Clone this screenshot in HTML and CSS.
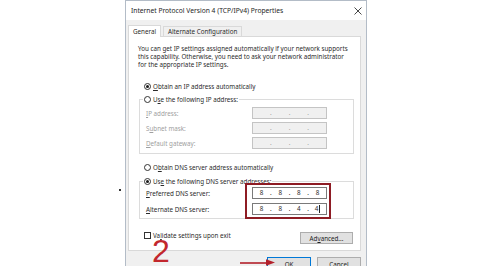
FILE: index.html
```html
<!DOCTYPE html>
<html>
<head>
<meta charset="utf-8">
<link rel="stylesheet" href="styles.css">
</head>
<body>
<div class="page">
  <span class="dot"></span>
  <div class="dialog">
    <div class="titlebar">
      <span class="title">Internet Protocol Version 4 (TCP/IPv4) Properties</span>
      <svg class="close" width="8" height="8" viewBox="0 0 8 8"><path d="M0.5 0.5L7.5 7.5M7.5 0.5L0.5 7.5" stroke="#333" stroke-width="0.9" fill="none"/></svg>
    </div>
    <div class="body">
      <div class="tabs">
        <span class="tab active">General</span>
        <span class="tab">Alternate Configuration</span>
      </div>
      <div class="panel">
        <p class="intro">You can get IP settings assigned automatically if your network supports<br>this capability. Otherwise, you need to ask your network administrator<br>for the appropriate IP settings.</p>
        <div class="opt first"><span class="radio on"></span><span><u>O</u>btain an IP address automatically</span></div>
        <fieldset class="group ip">
          <legend class="opt"><span class="radio"></span><span>U<u>s</u>e the following IP address:</span></legend>
          <div class="row off"><span class="label"><u>I</u>P address:</span><span class="field"><i></i><b>.</b><i></i><b>.</b><i></i><b>.</b><i></i></span></div>
          <div class="row off"><span class="label">S<u>u</u>bnet mask:</span><span class="field"><i></i><b>.</b><i></i><b>.</b><i></i><b>.</b><i></i></span></div>
          <div class="row off"><span class="label"><u>D</u>efault gateway:</span><span class="field"><i></i><b>.</b><i></i><b>.</b><i></i><b>.</b><i></i></span></div>
        </fieldset>
        <div class="opt dnsauto"><span class="radio"></span><span>O<u>b</u>tain DNS server address automatically</span></div>
        <fieldset class="group dns">
          <legend class="opt"><span class="radio on"></span><span>Us<u>e</u> the following DNS server addresses:</span></legend>
          <div class="row"><span class="label"><u>P</u>referred DNS server:</span><span class="field on"><i>8</i><b>.</b><i>8</i><b>.</b><i>8</i><b>.</b><i>8</i></span></div>
          <div class="row"><span class="label"><u>A</u>lternate DNS server:</span><span class="field on"><i>8</i><b>.</b><i>8</i><b>.</b><i>4</i><b>.</b><i>4<span class="caret"></span></i></span></div>
        </fieldset>
        <div class="bottomrow">
          <div class="check"><span class="box"></span><span>Va<u>l</u>idate settings upon exit</span></div>
          <span class="btn adv">Ad<u>v</u>anced...</span>
        </div>
      </div>
      <div class="buttons">
        <span class="btn ok">OK</span>
        <span class="btn">Cancel</span>
      </div>
    </div>
  </div>
  <div class="redbox"></div>
  <div class="two">2</div>
  <svg class="arrow" width="40" height="12" viewBox="0 0 40 12"><path d="M2 7H31" stroke="#b3202a" stroke-width="1.6"/><path d="M28 3.2L37 6.6L28 9.8Z" fill="#b3202a"/></svg>
</div>
</body>
</html>
```
FILE: styles.css
```css
* { box-sizing: border-box; }
body {
  margin: 0;
  background: #fff;
  font-family: "Noto Sans", "Open Sans", sans-serif;
  font-size: 6.25px;
  color: #2a2a2a;
}
u { text-decoration: underline; text-underline-offset: 1px; }
.page {
  width: 504px;
  height: 266px;
  overflow: hidden;
  position: relative;
}
.dot {
  position: absolute;
  left: 119px;
  top: 189px;
  width: 2px;
  height: 2px;
  background: #333;
}
.dialog {
  margin-left: 125px;
  width: 242px;
  height: 290px;
  border: 1px solid #b3bcc7;
  border-bottom: none;
  background: #f0f0f0;
}
.titlebar {
  height: 19px;
  background: #fff;
  display: flex;
  align-items: center;
  justify-content: space-between;
  padding: 0 4px 0 5px;
  font-size: 6.7px;
  color: #1e1e1e;
  white-space: nowrap;
}
.close { display: block; }
.body {
  padding: 4px 5px 0 2px;
}
.tabs {
  display: flex;
  align-items: flex-end;
  height: 12px;
  gap: 2px;
  white-space: nowrap;
}
.tab {
  height: 10px;
  line-height: 9px;
  padding: 0 4px;
  border: 1px solid #d9d9d9;
  border-bottom: none;
  background: #f0f0f0;
}
.tab.active {
  width: 33px;
  height: 12px;
  line-height: 11px;
  background: #fff;
  margin-bottom: -1px;
  position: relative;
  z-index: 1;
}
.panel {
  height: 215px;
  border: 1px solid #d9d9d9;
  background: #fff;
  padding: 8px 7px 0 9px;
  white-space: nowrap;
}
.intro {
  margin: 0;
  line-height: 8px;
}
.opt {
  display: flex;
  align-items: center;
  gap: 2px;
  height: 12px;
}
.opt.first { margin: 11px 0 0 6px; }
.opt.dnsauto { margin: 7px 0 0 6px; }
.radio {
  width: 7px;
  height: 7px;
  border: 1px solid #333;
  border-radius: 50%;
  display: flex;
  align-items: center;
  justify-content: center;
  background: #fff;
}
.radio.on::after {
  content: "";
  width: 3px;
  height: 3px;
  border-radius: 50%;
  background: #1a1a1a;
}
.group {
  margin: 1px 0 0 1px;
  width: 215px;
  border: 1px solid #dcdcdc;
  padding: 2px 26px 4px 3px;
  min-width: 0;
}
.group.dns { margin-top: 2px; padding: 0 26px 3px 3px; }
.group legend {
  padding: 0 1px;
}
.row {
  display: flex;
  align-items: center;
  justify-content: space-between;
  height: 12px;
  padding-left: 3px;
}
.group.ip .row + .row { margin-top: 3px; }
.group.dns .row + .row { margin-top: 4px; }
.row.off .label { color: #a0a0a0; }
.field {
  width: 75px;
  height: 12px;
  border: 1px solid #c4c4c4;
  background: #f0f0f0;
  display: grid;
  grid-template-columns: 1fr auto 1fr auto 1fr auto 1fr;
  align-items: center;
  color: #a0a0a0;
  line-height: 10px;
}
.field i, .field b {
  font-style: normal;
  font-weight: normal;
  text-align: center;
}
.field.on {
  border-color: #7a7a7a;
  background: #fff;
  color: #2a2a2a;
}
.caret {
  display: inline-block;
  width: 1px;
  height: 8px;
  background: #222;
  vertical-align: middle;
  margin-left: 1px;
}
.bottomrow {
  display: flex;
  justify-content: space-between;
  align-items: flex-start;
  margin: 10px 0 0 6px;
}
.check {
  display: flex;
  align-items: center;
  gap: 2px;
  height: 12px;
}
.box {
  width: 7px;
  height: 7px;
  border: 1px solid #333;
  background: #fff;
}
.btn {
  display: flex;
  align-items: center;
  justify-content: center;
  height: 12px;
  border: 1px solid #adadad;
  background: #e1e1e1;
  color: #222;
}
.btn.adv { width: 53px; margin-top: 3px; }
.buttons {
  display: flex;
  justify-content: flex-end;
  gap: 6px;
  margin-top: 6px;
  padding-right: 0;
}
.buttons .btn { width: 44px; height: 14px; }
.btn.ok { border-color: #0078d7; }
.redbox {
  position: absolute;
  left: 245px;
  top: 183px;
  width: 86px;
  height: 36px;
  border: 2px solid #8e1c24;
}
.two {
  position: absolute;
  left: 152px;
  top: 240px;
  font-family: "Liberation Sans", sans-serif;
  font-size: 32px;
  line-height: 23px;
  color: #c2272d;
}
.arrow {
  position: absolute;
  left: 238px;
  top: 256px;
}
```
